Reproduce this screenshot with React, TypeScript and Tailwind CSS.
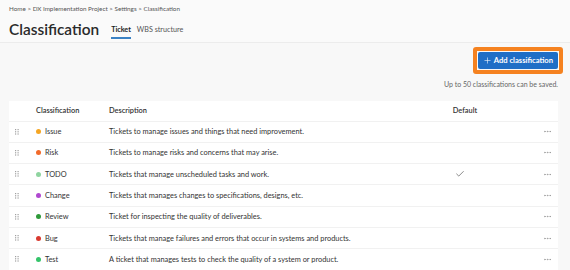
import { Plus, Check, MoreHorizontal } from "lucide-react";

const rows = [
  { name: "Issue", color: "#f5a623", desc: "Tickets to manage issues and things that need improvement." },
  { name: "Risk", color: "#f26a2a", desc: "Tickets to manage risks and concerns that may arise." },
  { name: "TODO", color: "#8fd4a0", desc: "Tickets that manage unscheduled tasks and work.", def: true },
  { name: "Change", color: "#b049d0", desc: "Tickets that manages changes to specifications, designs, etc." },
  { name: "Review", color: "#2f9a3a", desc: "Ticket for inspecting the quality of deliverables." },
  { name: "Bug", color: "#d93a30", desc: "Tickets that manage failures and errors that occur in systems and products." },
  { name: "Test", color: "#34c46a", desc: "A ticket that manages tests to check the quality of a system or product." },
];

function Grip() {
  return (
    <svg width="4" height="6" viewBox="0 0 4 6" className="text-[#a0a0a0]">
      {[0, 1].map((c) =>
        [0, 1, 2].map((r) => <rect key={`${c}${r}`} x={c * 2.5} y={r * 2.2} width="1.2" height="1.2" fill="currentColor" />)
      )}
    </svg>
  );
}

export default function App() {
  return (
    <div className="h-[270px] w-[570px] overflow-hidden bg-[#f8f8f8] font-['Lato',sans-serif] text-[#333]">
      <div className="h-[43px] border-b border-[#ececec] bg-[#fafafa] px-[9px]">
        <div className="pt-[4px] text-[6.3px] text-[#555]">
          Home &gt; DX Implementation Project &gt; Settings &gt; Classification
        </div>
        <div className="mt-[6px] flex items-end gap-[12px]">
          <h1 className="text-[15.4px] font-semibold leading-[20px] text-[#2a2a2a]">Classification</h1>
          <div className="flex gap-[6px] pb-[0px] text-[7.2px]">
            <span className="border-b-2 border-[#3b82c4] pb-[2px] font-bold text-[#222]">Ticket</span>
            <span className="pb-[2px] text-[#555]">WBS structure</span>
          </div>
        </div>
      </div>

      <div className="flex flex-col items-end pr-[12px] pt-[4px]">
        <div className="mr-[-5px] rounded-[3px] border-[4px] border-[#f58220] p-[1px]">
          <button className="flex h-[17px] items-center gap-[2px] rounded-[2px] bg-[#1f6ec6] px-[5px] text-[7.6px] font-bold text-white">
            <Plus size={9} strokeWidth={1.5} />
            Add classification
          </button>
        </div>
        <div className="mt-[5px] text-[7px] text-[#666]">Up to 50 classifications can be saved.</div>
      </div>

      <div className="ml-[9px] mt-[11px] w-[549px] bg-white text-[7.4px]">
        <div className="flex h-[20px] items-center font-semibold text-[#333]">
          <div className="w-[27px]" />
          <div className="w-[73px]">Classification</div>
          <div className="flex-1">Description</div>
          <div className="w-[60px] text-center">Default</div>
          <div className="w-[41px]" />
          <div className="w-[22px]" />
        </div>
        {rows.map((r) => (
          <div key={r.name} className="flex h-[21.3px] items-center border-t-[1.5px] border-[#f1f1f1]">
            <div className="flex w-[27px] pl-[6px]">
              <Grip />
            </div>
            <div className="flex w-[73px] items-center gap-[4px]">
              <span className="h-[5px] w-[5px] rounded-full" style={{ background: r.color }} />
              <span>{r.name}</span>
            </div>
            <div className="flex-1">{r.desc}</div>
            <div className="flex w-[60px] justify-center pr-[10px]">
              {r.def && <Check size={10} strokeWidth={1.5} className="text-[#444]" />}
            </div>
            <div className="w-[41px]" />
            <div className="flex w-[22px] justify-center text-[#999]">
              <MoreHorizontal size={9} strokeWidth={2} />
            </div>
          </div>
        ))}
      </div>
    </div>
  );
}
